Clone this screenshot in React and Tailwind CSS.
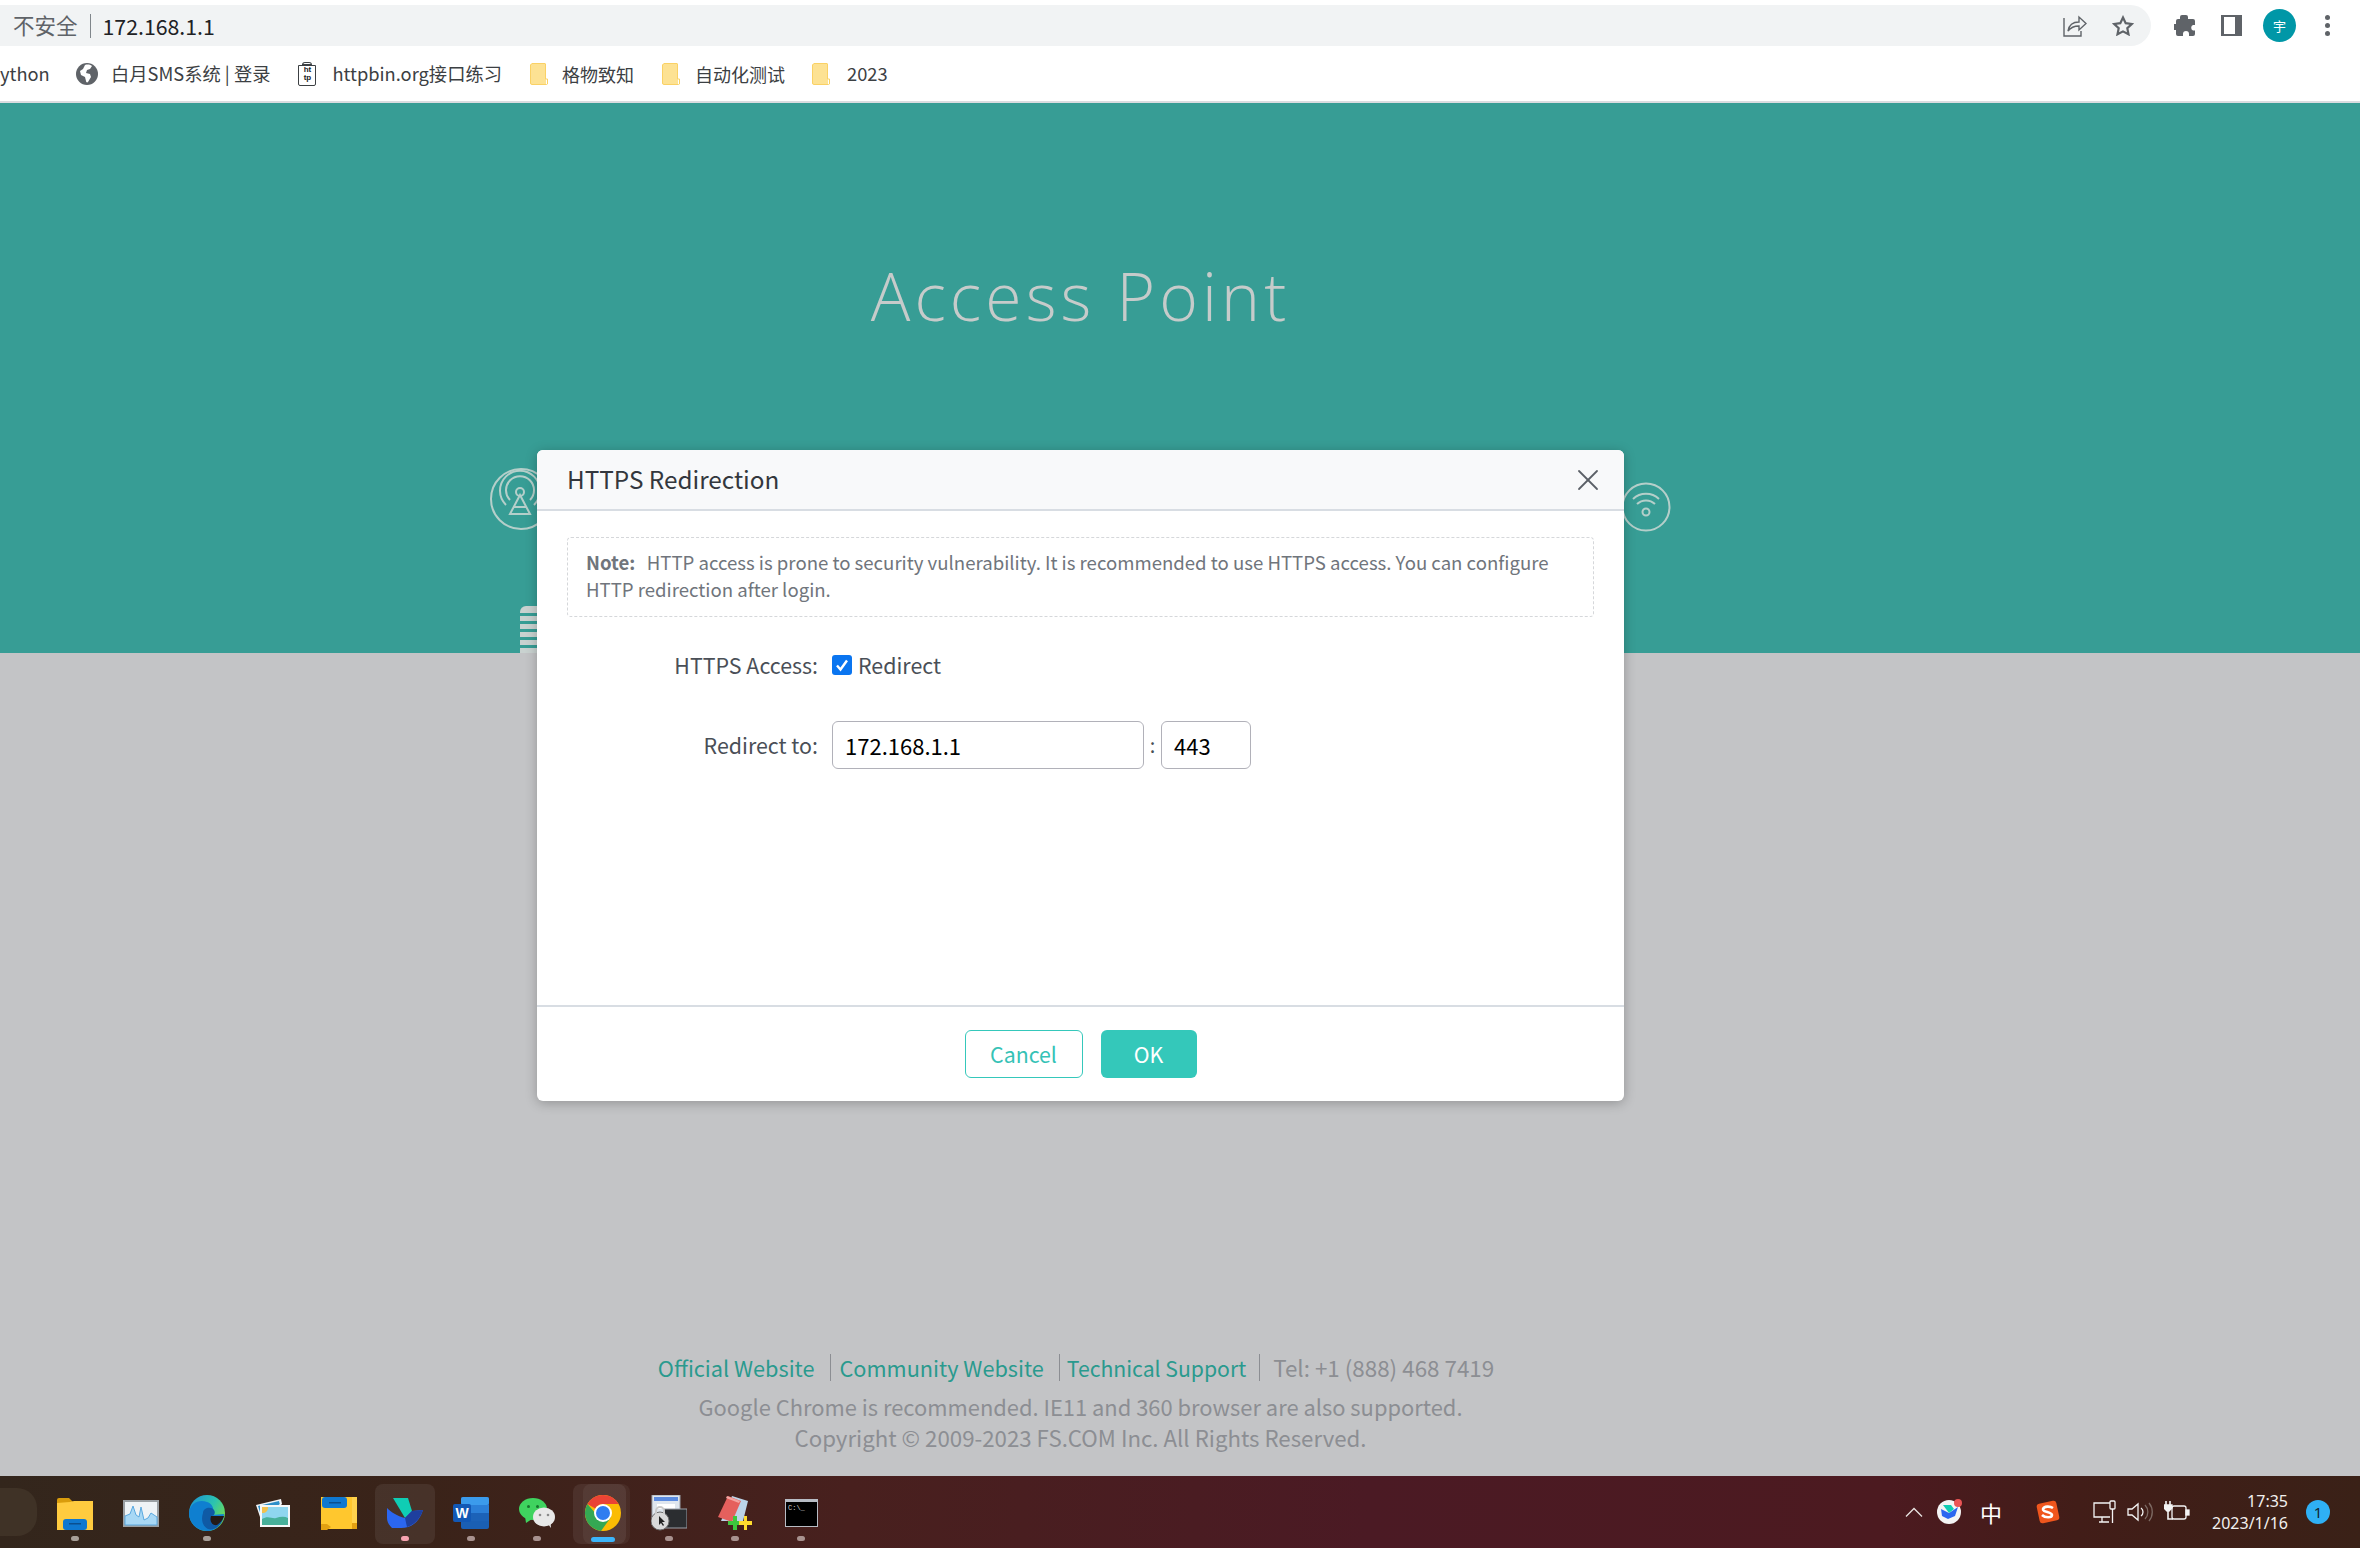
import { X } from 'lucide-react';

const CJK = "font-['Noto_Sans_CJK_SC',sans-serif]";

function Globe() {
  return (
    <svg width="22" height="22" viewBox="0 0 22 22">
      <circle cx="11" cy="11" r="11" fill="#5f6368" />
      <path d="M9 2c3-1 6 0 7 1l-2 3-3 1-1 3 4 1 1 3-3 5c-1 1-2 0-2-1l-1-4-4-2-1-4 3-2z" fill="#fff" />
    </svg>
  );
}

function BinIcon() {
  return (
    <div className="relative h-[24px] w-[18px]">
      <div className="mx-auto h-[3px] w-[10px] rounded-t-sm border border-[#3c4043]" />
      <div className="flex h-[21px] w-[18px] flex-col items-center rounded-b-[2px] border-[1.5px] border-[#3c4043] bg-white text-[8px] leading-[8px] font-bold text-[#202124]">
        <span className="font-['Liberation_Sans',sans-serif]">ht</span>
        <span className="font-['Liberation_Sans',sans-serif]">tp</span>
      </div>
    </div>
  );
}

function FolderMark() {
  return (
    <svg width="18" height="22" viewBox="0 0 18 22">
      <path d="M2 0h13l1 1v20l-1 1H2l-2-1V2z" fill="#fde293" />
      <path d="M2 .5h13l.5.5v15h2v5l-1 .5H2l-1.500-1V2z" fill="none" stroke="#fad165" strokeWidth="1" />
    </svg>
  );
}

function ChromeBars() {
  return (
    <div className="bg-white">
      <div className="flex h-[47px] items-start">
        <div className="mt-[5px] flex h-[41px] w-[2151px] items-center rounded-r-[21px] bg-[#f1f3f4] pr-[17px] pl-[13px]">
          <span className={`${CJK} text-[21.5px] text-[#5f6368]`}>不安全</span>
          <span className="mx-[12px] h-[24px] w-px bg-[#80868b]" />
          <span className={`${CJK} text-[21.3px] text-[#202124]`}>172.168.1.1</span>
          <div className="ml-auto flex items-center gap-[25px] text-[#5f6368]">
            <svg width="24" height="22" viewBox="0 0 24 22" fill="none" stroke="#5f6368" strokeWidth="1.400">
              <path d="M1 3v18h17v-5" />
              <path d="M5 16c1-6 5-9 11-9V2l7 6.500-7 6.500V11c-4 0-8 1-11 5z" />
            </svg>
            <svg width="22" height="21" viewBox="0 0 22 21" fill="none" stroke="#5f6368" strokeWidth="2.200">
              <path d="M11 2.500l2.700 5.700 6.100.8-4.500 4.200 1.200 6.100L11 16.400l-5.500 2.900 1.200-6.100L2.200 9l6.100-.8z" />
            </svg>
          </div>
        </div>
        <div className="mt-[9px] ml-[23px] flex items-center">
          <svg width="21" height="21" viewBox="0 0 21 21" fill="#5f6368">
            <path d="M8 0h4a2 2 0 0 1 2 2v2h5a2 2 0 0 1 2 2v4h-2a3 3 0 0 0 0 5.500h2V19a2 2 0 0 1-2 2h-4v-2a3 3 0 0 0-6 0v2H4a2 2 0 0 1-2-2v-4H0V9h2V6a2 2 0 0 1 2-2h2V2a2 2 0 0 1 2-2z" />
          </svg>
          <div className="ml-[26px] flex h-[21px] w-[21px] justify-end border-y-[2px] border-r-[7px] border-l-[3px] border-[#5f6368] bg-white" />
          <div className={`${CJK} ml-[21px] flex h-[33px] w-[33px] items-center justify-center rounded-full bg-[#0097a7] text-[13px] text-white`}>宇</div>
          <div className="ml-[29px] flex flex-col gap-[3px]">
            <span className="h-[5px] w-[5px] rounded-full bg-[#5f6368]" />
            <span className="h-[5px] w-[5px] rounded-full bg-[#5f6368]" />
            <span className="h-[5px] w-[5px] rounded-full bg-[#5f6368]" />
          </div>
        </div>
      </div>
      <div className={`${CJK} flex h-[56px] items-center border-b-[2px] border-[#dadce0] text-[18.3px] whitespace-nowrap text-[#3c4043]`}>
        <span className="w-[76px]">ython</span>
        <Globe />
        <span className="ml-[13px]">白月SMS系统 | 登录</span>
        <span className="ml-[28px]"><BinIcon /></span>
        <span className="ml-[16px]">httpbin.org接口练习</span>
        <span className="ml-[28px]"><FolderMark /></span>
        <span className="ml-[14px] text-[18px]">格物致知</span>
        <span className="ml-[28px]"><FolderMark /></span>
        <span className="ml-[15px] text-[18px]">自动化测试</span>
        <span className="ml-[27px]"><FolderMark /></span>
        <span className="ml-[17px]">2023</span>
      </div>
    </div>
  );
}

function Backdrop() {
  return (
    <div className="flex h-[550px] w-[2161px] justify-center bg-[#379d95] pt-[148px]">
      <h1 className="font-['Open_Sans',sans-serif] text-[66px] leading-[88px] font-light tracking-[0.062em] text-[#c6cbca]">
        Access Point
      </h1>
    </div>
  );
}

function BackdropIcons() {
  return (
    <>
      <svg className="absolute top-[365px] left-[490px]" width="62" height="62" viewBox="0 0 62 62" fill="none" stroke="#b5cfca" strokeWidth="2">
        <circle cx="31" cy="31" r="30" />
        <circle cx="30" cy="24" r="4" />
        <path d="M20 32a14 14 0 1 1 20 0M16 37a20 20 0 1 1 28 0" />
        <path d="M30 27l-10 19h20zM24 39h12" />
      </svg>
      <svg className="absolute top-[379px] left-[1621px]" width="50" height="50" viewBox="0 0 50 50" fill="none" stroke="#b5cfca" strokeWidth="2">
        <circle cx="25" cy="25" r="23.500" />
        <circle cx="25" cy="30" r="3.500" />
        <path d="M16 22a13 13 0 0 1 18 0M12 17a19 19 0 0 1 26 0" />
      </svg>
      <div className="absolute top-[503px] left-[520px] flex w-[20px] flex-col gap-[3px]">
        <span className="h-[7px] rounded-tl-[6px] bg-[#c9d2d0]" />
        <span className="h-[5px] bg-[#c9d2d0]" />
        <span className="h-[5px] bg-[#c9d2d0]" />
        <span className="h-[5px] bg-[#c9d2d0]" />
        <span className="h-[5px] bg-[#c9d2d0]" />
        <span className="h-[5px] bg-[#c9d2d0]" />
      </div>
    </>
  );
}

function Dialog() {
  return (
    <div className="absolute top-[347px] left-0 flex w-[2161px] justify-center">
      <div className={`${CJK} flex h-[651px] w-[1087px] flex-col overflow-hidden rounded-[6px] bg-white shadow-[0_2px_12px_rgba(0,0,0,0.25)]`}>
        <div className="flex h-[61px] shrink-0 items-center justify-between border-b-[2px] border-[#d8dde3] bg-[#f8f9fa] pr-[18px] pl-[30px]">
          <h2 className="text-[24.3px] font-normal text-[#33373d]">HTTPS Redirection</h2>
          <X size={36} strokeWidth={1.200} color="#5a5f66" />
        </div>
        <div className="flex-1 px-[30px] pt-[26px]">
          <div className="h-[80px] rounded-[4px] border border-dashed border-[#d5d7da] px-[18px] py-[10px] text-[18.6px] leading-[27px] text-[#70757c]">
            <strong className="mr-[3px] font-bold">Note:</strong>&nbsp; HTTP access is prone to security vulnerability. It is recommended to use HTTPS access. You can configure HTTP redirection after login.
          </div>
          <div className="mt-[30px] flex h-[36px] items-center text-[21.4px] text-[#4a4f57]">
            <span className="w-[251px] text-right">HTTPS Access:</span>
            <span className="ml-[14px] flex h-[20px] w-[20px] items-center justify-center rounded-[3px] bg-[#0a75f0]">
              <svg width="14" height="14" viewBox="0 0 14 14" fill="none" stroke="#fff" strokeWidth="2.400">
                <path d="M2 7.500l3.500 4L12 2.500" />
              </svg>
            </span>
            <span className="ml-[6px]">Redirect</span>
          </div>
          <div className="mt-[38px] flex items-center text-[21.4px] text-[#4a4f57]">
            <span className="w-[251px] text-right">Redirect to:</span>
            <div className="ml-[14px] flex h-[48px] w-[312px] items-center rounded-[6px] border border-[#b1b1b9] pl-[12px] text-[22px] text-black">172.168.1.1</div>
            <span className="w-[17px] text-center text-[20px]">:</span>
            <div className="flex h-[48px] w-[90px] items-center rounded-[6px] border border-[#b1b1b9] pl-[12px] text-[22px] text-black">443</div>
          </div>
        </div>
        <div className="flex h-[96px] shrink-0 items-center justify-center gap-[18px] border-t-[2px] border-[#d8dde3] text-[21.3px]">
          <button type="button" className="flex h-[48px] w-[118px] items-center justify-center rounded-[6px] border border-[#35c8bb] bg-white text-[#35c2b6]">Cancel</button>
          <button type="button" className="flex h-[48px] w-[96px] items-center justify-center rounded-[6px] bg-[#34c8ba] text-white">OK</button>
        </div>
      </div>
    </div>
  );
}

function PageFooter() {
  return (
    <div className={`${CJK} flex w-[2161px] flex-1 flex-col items-center justify-end pb-[23px] text-[21.9px] leading-[31px] text-[#8c8e93]`}>
      <div className="mr-[9px] flex items-center">
        <a className="pr-[15px] text-[21.7px] text-[#2a9a8e]">Official Website</a>
        <span className="h-[27px] w-px bg-[#8c8e93]" />
        <a className="pr-[15px] pl-[9px] text-[21.7px] text-[#2a9a8e]">Community Website</a>
        <span className="h-[27px] w-px bg-[#8c8e93]" />
        <a className="pr-[13px] pl-[7px] text-[21.2px] text-[#2a9a8e]">Technical Support</a>
        <span className="h-[27px] w-px bg-[#8c8e93]" />
        <span className="pl-[13px] text-[22.4px]">Tel: +1 (888) 468 7419</span>
      </div>
      <p className="mt-[8px]">Google Chrome is recommended. IE11 and 360 browser are also supported.</p>
      <p className="text-[22.25px]">Copyright © 2009-2023 FS.COM Inc. All Rights Reserved.</p>
    </div>
  );
}

const FolderApp = () => (
  <svg width="36" height="33" viewBox="0 0 36 33">
    <path d="M0 3a2 2 0 0 1 2-2h10l5 5H0z" fill="#d99c0c" />
    <path d="M0 6l13-1 4-1h19v29H0z" fill="#ffcb3f" />
    <rect x="6" y="22" width="24" height="11" rx="3" fill="#0f78d0" />
    <rect x="12" y="26" width="12" height="1.500" fill="#0a4f8f" />
  </svg>
);

const MonitorApp = () => (
  <svg width="36" height="27" viewBox="0 0 36 27">
    <rect width="36" height="27" fill="#9aa0a4" />
    <rect x="2" y="2" width="32" height="23" fill="#eef3f6" />
    <path d="M2 25V16l5-2 3-8 3 9 3 2 2-10 3 13 4-2 3-5 6 4v8z" fill="#a8d8f5" stroke="#5aa9e0" strokeWidth="1" />
  </svg>
);

const EdgeApp = () => (
  <svg width="36" height="36" viewBox="0 0 36 36">
    <defs>
      <linearGradient id="edgeTop" x1="0" y1="0" x2="1" y2="0.600">
        <stop offset="0" stopColor="#1b8fd8" />
        <stop offset="0.600" stopColor="#2bc3b0" />
        <stop offset="1" stopColor="#6fdc55" />
      </linearGradient>
    </defs>
    <circle cx="18" cy="18" r="18" fill="url(#edgeTop)" />
    <path d="M0 18C1 8 10 4 18 7c6 2 8 8 5 13l12-1c-1 10-8 17-17 17C8 36 0 28 0 18z" fill="#0f7fd0" />
    <path d="M14 18c0-5 8-7 11-3 2 3 0 6-3 6h13c-2 9-9 15-16 13-6-3-7-10-5-16z" fill="#0f5aa5" />
    <path d="M22 21h13c-1 4-4 7-7 9-4 1-8-3-6-9z" fill="#241a16" />
  </svg>
);

const PhotosApp = () => (
  <svg width="34" height="28" viewBox="0 0 34 28">
    <path d="M0 6L25 0l1 5L6 24z" fill="#f2f5f7" />
    <path d="M2 7l21-5 .8 3L6 20z" fill="#2d8fc9" />
    <rect x="4" y="6" width="30" height="22" fill="#f6f8f8" />
    <rect x="6" y="8" width="26" height="18" fill="#8fd6ef" />
    <path d="M6 20c6-4 10 0 14-1s8-2 12 0v7H6z" fill="#47b09a" />
    <path d="M6 8h6c0 4-2 6-6 6z" fill="#f2c14e" />
  </svg>
);

const NotesApp = () => (
  <svg width="36" height="33" viewBox="0 0 36 33">
    <rect x="0" width="31" height="32" fill="#ffc72e" />
    <rect x="31" width="5" height="26" fill="#ffd24d" />
    <rect x="31" y="26" width="5" height="6" fill="#e2a012" />
    <rect x="1" width="25" height="11" rx="3" fill="#0f78d0" />
    <rect x="8" y="5" width="12" height="1.500" fill="#0a4f8f" />
    <path d="M0 27h6l4 3-4 3H0z" fill="#e2a012" />
  </svg>
);

const BirdApp = () => (
  <svg width="36" height="30" viewBox="0 0 36 30">
    <path d="M6 0h15l4 13-7 7z" fill="#0fcdb4" />
    <path d="M0 10c4 4 10 8 18 10l7-7 11-1c-3 10-10 18-22 18H5c-3-3-5-6-5-10z" fill="#2b66f0" />
    <path d="M18 20l7-7 11-1c-3 9-9 15-16 17z" fill="#1e3f9e" />
  </svg>
);

const WordApp = () => (
  <svg width="36" height="32" viewBox="0 0 36 32">
    <rect x="8" width="28" height="32" rx="2" fill="#1a5fb4" />
    <rect x="8" width="28" height="8" rx="2" fill="#3b9bec" />
    <rect x="8" y="8" width="28" height="8" fill="#2b7fd8" />
    <rect x="8" y="16" width="28" height="8" fill="#1c62b8" />
    <rect y="7" width="18" height="18" rx="2" fill="#1258b5" />
    <text x="9" y="21" textAnchor="middle" fontSize="14" fontWeight="700" fill="#fff" fontFamily="Liberation Sans, sans-serif">W</text>
  </svg>
);

const WechatApp = () => (
  <svg width="36" height="30" viewBox="0 0 36 30">
    <ellipse cx="14" cy="11" rx="14" ry="11" fill="#3fd35f" />
    <path d="M6 18l1 7 6-4z" fill="#3fd35f" />
    <circle cx="9.500" cy="8.500" r="1.500" fill="#16742c" />
    <circle cx="18.500" cy="8.500" r="1.500" fill="#16742c" />
    <ellipse cx="25" cy="19" rx="11" ry="9.500" fill="#e8e8e8" />
    <path d="M29 26l3 4-.5-6z" fill="#e8e8e8" />
    <circle cx="21" cy="17" r="1.300" fill="#8a8a8a" />
    <circle cx="29" cy="17" r="1.300" fill="#8a8a8a" />
  </svg>
);

const ChromeApp = () => (
  <svg width="36" height="36" viewBox="0 0 36 36">
    <circle cx="18" cy="18" r="18" fill="#fbbc04" />
    <path d="M2.400 9A18 18 0 0 0 16 35.900L25.800 22.500H18a9 9 0 0 1-7.800-4.500z" fill="#34a853" />
    <path d="M18 0a18 18 0 0 1 15.600 9H18a9 9 0 0 0-7.800 4.500L2.400 9A18 18 0 0 1 18 0z" fill="#ea4335" />
    <circle cx="18" cy="18" r="9" fill="#fff" />
    <circle cx="18" cy="18" r="7" fill="#2f7df0" />
  </svg>
);

const LockApp = () => (
  <svg width="36" height="36" viewBox="0 0 36 36">
    <rect x="1" width="28" height="26" fill="#dfe6ee" stroke="#9aa0a8" />
    <rect x="3" y="2" width="24" height="4" fill="#5b8be0" />
    <rect x="6" y="9" width="18" height="5" fill="#fff" />
    <rect x="13" y="14" width="23" height="19" fill="#2b2d30" stroke="#9aa0a8" />
    <circle cx="9" cy="26" r="9" fill="#d9d9d9" stroke="#6d6d6d" />
    <path d="M5 19v-3a4 4 0 0 1 8 0v3" fill="none" stroke="#c9c9c9" strokeWidth="2" />
    <path d="M8 21v9l2-2 2 3 1-1-2-3h3z" fill="#222" />
  </svg>
);

const PadApp = () => (
  <svg width="34" height="34" viewBox="0 0 34 34">
    <path d="M14 0l16 5-5 20H3z" fill="#bcd4e8" />
    <path d="M10 0l13 5-9 21-14-5z" fill="#e5605d" />
    <path d="M9 0l13 5-1 2L8 2z" fill="#f3a5a2" />
    <path d="M15 20h4v5h5v4h-5v5h-4v-5h-5v-4h5z" fill="#3ec63e" />
    <path d="M26 20h3v5h5v4h-5v5h-3v-5h-5v-4h5z" fill="#ffdc2e" />
  </svg>
);

const CmdApp = () => (
  <svg width="33" height="28" viewBox="0 0 33 28">
    <rect width="33" height="28" fill="#b8bcc4" />
    <rect x="1" y="3" width="31" height="24" fill="#000" />
    <text x="3" y="11" fontSize="7" fill="#d0d0d0" fontFamily="Liberation Mono, monospace">C:\_</text>
  </svg>
);

const apps = [
  { icon: FolderApp, dot: 'bg-[#a79f98]' },
  { icon: MonitorApp },
  { icon: EdgeApp, dot: 'bg-[#a79f98]' },
  { icon: PhotosApp },
  { icon: NotesApp },
  { icon: BirdApp, dot: 'bg-[#f7a3b0]', active: true },
  { icon: WordApp, dot: 'bg-[#a8928f]' },
  { icon: WechatApp, dot: 'bg-[#a8928f]' },
  { icon: ChromeApp, pill: true, active: true, stack: true },
  { icon: LockApp, dot: 'bg-[#a8928f]' },
  { icon: PadApp, dot: 'bg-[#a8928f]' },
  { icon: CmdApp, dot: 'bg-[#a8928f]' },
];

function TaskApp({ app }) {
  const Icon = app.icon;
  return (
    <div className="relative flex h-[60px] w-[66px] items-center justify-center pb-[1px]">
      {app.stack && <span className="absolute top-0 left-[13px] h-[60px] w-[47px] rounded-lg bg-[#ffffff0d]" />}
      {app.active && (
        <span className={`absolute top-0 left-[3px] h-[60px] rounded-lg bg-[#ffffff12] ${app.stack ? 'w-[53px]' : 'w-[60px]'}`} />
      )}
      <span className="relative flex"><Icon /></span>
      {app.dot && <span className={`absolute bottom-[3px] left-[29px] h-[5px] w-[8px] rounded-full ${app.dot}`} />}
      {app.pill && <span className="absolute bottom-[2px] left-[21px] h-[5px] w-[24px] rounded-full bg-[#3bb5fb]" />}
    </div>
  );
}

function Tray() {
  return (
    <div className="ml-auto flex items-center pr-[30px] text-white">
      <svg width="18" height="10" viewBox="0 0 18 10" fill="none" stroke="#e8e4e2" strokeWidth="1.300">
        <path d="M1 9.500l8-8 8 8" />
      </svg>
      <span className="relative ml-[14px] flex">
        <svg width="24" height="24" viewBox="0 0 24 24">
          <circle cx="12" cy="12" r="12" fill="#f4f4f4" />
          <path d="M4 9l8 4 9-6-3 9-7 3-6-3z" fill="#2b66f0" />
          <path d="M6 5h8l3 4-5 4z" fill="#0fcdb4" />
        </svg>
        <span className="absolute -top-[1px] -right-[1px] h-[8px] w-[8px] rounded-full bg-[#ea5455]" />
      </span>
      <span className={`${CJK} ml-[19px] text-[22px] leading-none`}>中</span>
      <svg className="ml-[34px]" width="24" height="24" viewBox="0 0 24 24">
        <rect x="2" y="2" width="20" height="20" rx="3" fill="#f0561d" transform="rotate(-12 12 12)" />
        <path d="M17 8c-3-2-9-2-10 1s9 3 9 6-7 3-10 0" fill="none" stroke="#fff" strokeWidth="2.600" />
      </svg>
      <svg className="ml-[33px]" width="24" height="24" viewBox="0 0 24 24" fill="none" stroke="#f4f4f4" strokeWidth="1.300">
        <path d="M17 3H1v14h16M6 22h10M9 17v5" />
        <rect x="17" y="1" width="5" height="8" rx="1" />
        <path d="M19.500 9v14" />
      </svg>
      <svg className="ml-[10px]" width="26" height="22" viewBox="0 0 26 22" fill="none" stroke="#f4f4f4" strokeWidth="1.300">
        <path d="M1 8v6h4l6 5V3L5 8z" />
        <path d="M14 7a5 5 0 0 1 0 8" />
        <path d="M18 4a10 10 0 0 1 0 14M22 2a14 14 0 0 1 0 18" stroke="#7d6a63" />
      </svg>
      <svg className="ml-[11px]" width="26" height="22" viewBox="0 0 26 22" fill="none" stroke="#f4f4f4" strokeWidth="1.300">
        <rect x="8" y="5" width="14" height="13" rx="2" />
        <rect x="22" y="9" width="3" height="5" fill="#f4f4f4" />
        <path d="M2 0v4M6 0v4" strokeWidth="1.600" />
        <path d="M0 4h8v3l-3 3H3L0 7z" fill="#f4f4f4" />
        <path d="M4 10v8h5" strokeWidth="1.600" />
      </svg>
      <div className="ml-[22px] flex flex-col items-end font-['Noto_Sans',sans-serif] text-[16px] leading-[22px] text-[#f2f0ef]">
        <span>17:35</span>
        <span>2023/1/16</span>
      </div>
      <span className="ml-[18px] flex h-[24px] w-[24px] items-center justify-center rounded-full bg-[#2fb0f5] font-['Noto_Sans',sans-serif] text-[15px] text-[#12242f]">1</span>
    </div>
  );
}

function Taskbar() {
  return (
    <div className="flex h-[72px] shrink-0 items-center bg-[linear-gradient(90deg,#33261c_0%,#3a2319_18%,#48201e_36%,#4b1a24_58%,#4c1a20_80%,#421d18_88%,#3a2117_100%)]">
      <div className="h-[48px] w-[37px] rounded-r-[20px] bg-[#3f3226]" />
      <div className="ml-[5px] flex pt-[3px]">
        {apps.map((app, i) => (
          <TaskApp key={i} app={app} />
        ))}
      </div>
      <Tray />
    </div>
  );
}

export default function App() {
  return (
    <div className="flex h-[1548px] w-[2360px] flex-col overflow-hidden bg-[#c3c4c6]">
      <ChromeBars />
      <div className="relative flex flex-1 flex-col">
        <div className="bg-[#379d95]">
          <Backdrop />
        </div>
        <BackdropIcons />
        <PageFooter />
        <Dialog />
      </div>
      <Taskbar />
    </div>
  );
}
